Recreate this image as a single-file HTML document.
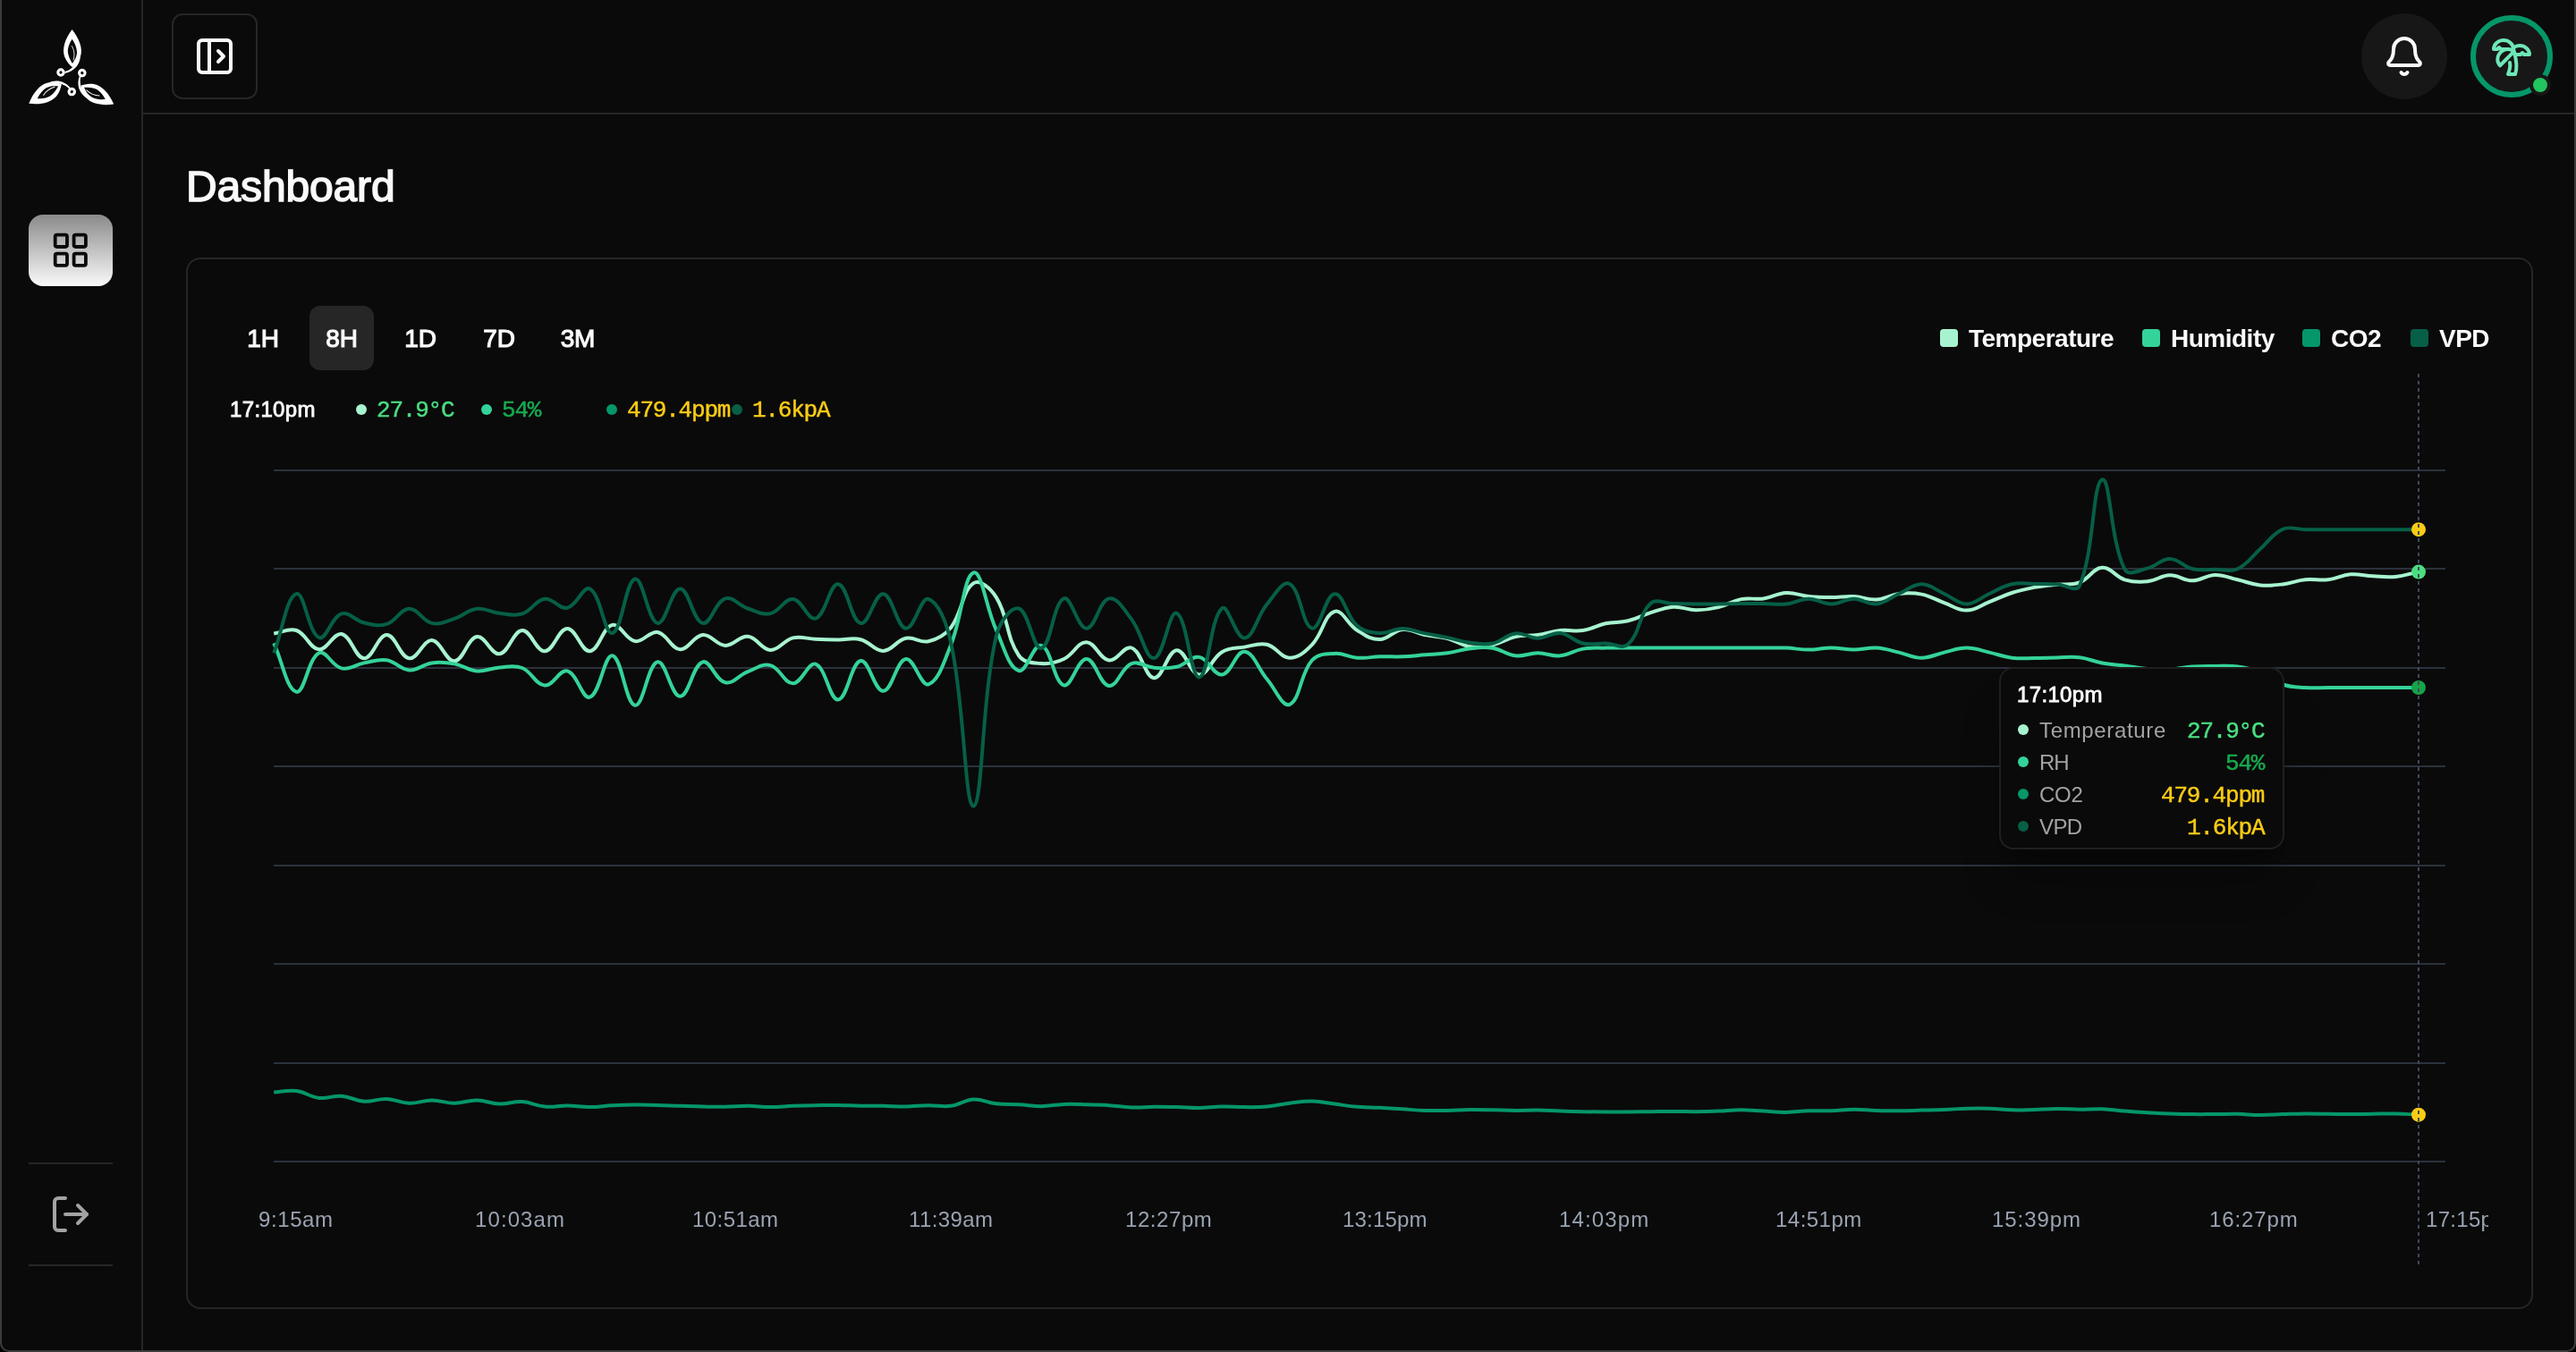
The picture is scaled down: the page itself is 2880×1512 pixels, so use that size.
<!DOCTYPE html>
<html><head><meta charset="utf-8"><title>Dashboard</title>
<style>
html,body{margin:0;padding:0;background:#000;}
body{width:2880px;height:1512px;overflow:hidden;position:relative;font-family:"Liberation Sans",sans-serif;}
#win{position:absolute;left:0;top:0;width:2876px;height:1510px;background:#0a0a0a;border:2px solid #3c3c3c;border-top:none;border-radius:0 0 10px 10px;}
.abs{position:absolute;}
svg{position:absolute;overflow:visible;}
.ic{fill:none;stroke-linecap:round;stroke-linejoin:round;stroke-width:2;}
</style></head><body>
<div id="win"></div>

<div class="abs" style="left:158px;top:0;width:2px;height:1510px;background:#262626"></div>
<svg width="160" height="140" style="left:0;top:0" viewBox="0 0 160 140"><defs><g id="leaf">
<path fill="#fff" fill-rule="evenodd" d="M80.6 32.9C73 43 69 54 72.2 63.5C74.3 69 78 72.8 81 75.2C85.2 72.2 88.6 68 90 63C93 54 88.4 43 80.6 32.9ZM80.6 43.8C77.3 49 74.8 55 76.4 61C77.4 65 79.4 68.4 81 71C83.6 67 86.2 63 86 58C85.7 52.4 83.2 47.8 80.6 43.8Z"/>
<path fill="none" stroke="#fff" stroke-width="0.9" stroke-linecap="round" d="M80.4 51.6C82.6 55.6 84 60 82.2 67"/>
<path fill="#fff" d="M90 63C89 72.5 83 80 72.5 81.9L72.5 80.1C78.5 78.5 83 74 86.5 68.5Z"/>
<circle cx="68" cy="81" r="3.2" fill="none" stroke="#fff" stroke-width="3.1"/>
</g></defs><use href="#leaf"/><use href="#leaf" transform="translate(0.2 -0.2) rotate(120 79.6 88.2)"/><use href="#leaf" transform="translate(1.1 0.75) rotate(240 79.6 88.2)"/></svg>
<div class="abs" style="left:32px;top:240px;width:94px;height:80px;border-radius:16px;background:linear-gradient(to bottom,#8a8a8a,#fafafa)"></div>
<svg class="ic" width="45.6" height="45.6" viewBox="0 0 24 24" style="left:56.2px;top:257.2px;stroke:#0a0a0a"><rect width="7" height="7" x="3" y="3" rx="1"/><rect width="7" height="7" x="14" y="3" rx="1"/><rect width="7" height="7" x="14" y="14" rx="1"/><rect width="7" height="7" x="3" y="14" rx="1"/></svg>
<div class="abs" style="left:32px;top:1300px;width:94px;height:2px;background:#262626"></div>
<div class="abs" style="left:32px;top:1414px;width:94px;height:2px;background:#262626"></div>
<svg class="ic" width="48" height="48" viewBox="0 0 24 24" style="left:55px;top:1334px;stroke:#a3a3a3"><path d="M9 21H5a2 2 0 0 1-2-2V5a2 2 0 0 1 2-2h4"/><polyline points="16 17 21 12 16 7"/><line x1="21" x2="9" y1="12" y2="12"/></svg>
<div class="abs" style="left:160px;top:126px;width:2718px;height:2px;background:#262626"></div>
<div class="abs" style="left:192px;top:15px;width:92px;height:92px;border:2px solid #262626;border-radius:12px"></div>
<svg class="ic" width="48" height="48" viewBox="0 0 24 24" style="left:216px;top:39px;stroke:#fafafa"><rect width="18" height="18" x="3" y="3" rx="2"/><path d="M9 3v18"/><path d="m14 9 3 3-3 3"/></svg>
<div class="abs" style="left:2640px;top:15px;width:96px;height:96px;border-radius:50%;background:#171717"></div>
<svg class="ic" width="48" height="48" viewBox="0 0 24 24" style="left:2664px;top:39px;stroke:#fafafa"><path d="M10.268 21a2 2 0 0 0 3.464 0"/><path d="M3.262 15.326A1 1 0 0 0 4 17h16a1 1 0 0 0 .74-1.673C19.41 13.956 18 12.499 18 8A6 6 0 0 0 6 8c0 4.499-1.411 5.956-2.738 7.326"/></svg>
<div class="abs" style="left:2762px;top:17px;width:80px;height:80px;border:6px solid #059669;border-radius:50%;background:#171717"></div>
<svg class="ic" width="48" height="48" viewBox="0 0 24 24" style="left:2784px;top:39px;stroke:#6ee7b7"><path d="M13 8c0-2.76-2.46-5-5.500-5S2 5.240 2 8h2l1-1 1 1h4"/><path d="M13 7.140A5.820 5.820 0 0 1 16.500 6c3.040 0 5.500 2.240 5.500 5h-3l-1-1-1 1h-3"/><path d="M5.890 9.710c-2.150 2.150-2.300 5.470-.350 7.430l4.240-4.250.700-.700.710-.710 2.120-2.120c-1.950-1.960-5.270-1.800-7.420.350"/><path d="M11 15.500c.500 2.500-.170 4.500-1 6.500h4c2-5.500-.500-12-1-14"/></svg>
<div class="abs" style="left:2828px;top:83px;width:16px;height:16px;border:4px solid #171717;border-radius:50%;background:#22c55e"></div>
<div style="position:absolute;left:207.9px;top:185.37px;font:normal 48px/48px 'Liberation Sans', sans-serif;color:#fafafa;white-space:pre;will-change:transform;letter-spacing:-0.15px;-webkit-text-stroke:1.5px #fafafa;">Dashboard</div>
<div class="abs" style="left:208px;top:288px;width:2620px;height:1172px;border:2px solid #262626;border-radius:16px"></div>
<div class="abs" style="left:346px;top:342px;width:72px;height:72px;border-radius:12px;background:#262626"></div>
<div style="position:absolute;left:258px;top:365.30px;font:normal 28px/28px 'Liberation Sans', sans-serif;color:#fafafa;white-space:pre;will-change:transform;letter-spacing:-0.2px;-webkit-text-stroke:1.1px #fafafa;width:72px;text-align:center;">1H</div>
<div style="position:absolute;left:346px;top:365.30px;font:normal 28px/28px 'Liberation Sans', sans-serif;color:#fafafa;white-space:pre;will-change:transform;letter-spacing:-0.2px;-webkit-text-stroke:1.1px #fafafa;width:72px;text-align:center;">8H</div>
<div style="position:absolute;left:434px;top:365.30px;font:normal 28px/28px 'Liberation Sans', sans-serif;color:#fafafa;white-space:pre;will-change:transform;letter-spacing:-0.2px;-webkit-text-stroke:1.1px #fafafa;width:72px;text-align:center;">1D</div>
<div style="position:absolute;left:522px;top:365.30px;font:normal 28px/28px 'Liberation Sans', sans-serif;color:#fafafa;white-space:pre;will-change:transform;letter-spacing:-0.2px;-webkit-text-stroke:1.1px #fafafa;width:72px;text-align:center;">7D</div>
<div style="position:absolute;left:610px;top:365.30px;font:normal 28px/28px 'Liberation Sans', sans-serif;color:#fafafa;white-space:pre;will-change:transform;letter-spacing:-0.2px;-webkit-text-stroke:1.1px #fafafa;width:72px;text-align:center;">3M</div>
<div class="abs" style="left:2169px;top:368px;width:20px;height:20px;border-radius:4px;background:#a7f3d0"></div>
<div style="position:absolute;left:2200.8px;top:364.60px;font:bold 28px/28px 'Liberation Sans', sans-serif;color:#fafafa;white-space:pre;will-change:transform;letter-spacing:-0.5px;">Temperature</div>
<div class="abs" style="left:2395px;top:368px;width:20px;height:20px;border-radius:4px;background:#34d399"></div>
<div style="position:absolute;left:2427.4px;top:364.60px;font:bold 28px/28px 'Liberation Sans', sans-serif;color:#fafafa;white-space:pre;will-change:transform;letter-spacing:-0.5px;">Humidity</div>
<div class="abs" style="left:2574px;top:368px;width:20px;height:20px;border-radius:4px;background:#059669"></div>
<div style="position:absolute;left:2606.4px;top:364.60px;font:bold 28px/28px 'Liberation Sans', sans-serif;color:#fafafa;white-space:pre;will-change:transform;letter-spacing:-0.5px;">CO2</div>
<div class="abs" style="left:2695px;top:368px;width:20px;height:20px;border-radius:4px;background:#065f46"></div>
<div style="position:absolute;left:2726.6000000000004px;top:364.60px;font:bold 28px/28px 'Liberation Sans', sans-serif;color:#fafafa;white-space:pre;will-change:transform;letter-spacing:-0.5px;">VPD</div>
<div style="position:absolute;left:257px;top:446.08px;font:normal 24px/24px 'Liberation Sans', sans-serif;color:#fafafa;white-space:pre;will-change:transform;letter-spacing:0.35px;-webkit-text-stroke:0.85px #fafafa;">17:10pm</div>
<div class="abs" style="left:398px;top:452px;width:12px;height:12px;border-radius:50%;background:#a7f3d0"></div>
<div style="position:absolute;left:421.4px;top:445.67px;font:normal 26px/26px 'Liberation Mono', monospace;color:#4ade80;white-space:pre;will-change:transform;letter-spacing:-1.2px;-webkit-text-stroke:0.45px #4ade80;">27.9°C</div>
<div class="abs" style="left:538px;top:452px;width:12px;height:12px;border-radius:50%;background:#34d399"></div>
<div style="position:absolute;left:561.4px;top:445.67px;font:normal 26px/26px 'Liberation Mono', monospace;color:#17aa50;white-space:pre;will-change:transform;letter-spacing:-1.2px;-webkit-text-stroke:0.45px #17aa50;">54%</div>
<div class="abs" style="left:678px;top:452px;width:12px;height:12px;border-radius:50%;background:#059669"></div>
<div style="position:absolute;left:701.4px;top:445.67px;font:normal 26px/26px 'Liberation Mono', monospace;color:#facc15;white-space:pre;will-change:transform;letter-spacing:-1.2px;-webkit-text-stroke:0.45px #facc15;">479.4ppm</div>
<div class="abs" style="left:817.5px;top:452px;width:12px;height:12px;border-radius:50%;background:#065f46"></div>
<div style="position:absolute;left:840.9px;top:445.67px;font:normal 26px/26px 'Liberation Mono', monospace;color:#facc15;white-space:pre;will-change:transform;letter-spacing:-1.2px;-webkit-text-stroke:0.45px #facc15;">1.6kpA</div>
<svg width="2880" height="1512" viewBox="0 0 2880 1512" style="left:0;top:0"><rect x="306" y="525" width="2428" height="2" fill="#2c313d"/><rect x="306" y="635" width="2428" height="2" fill="#2c313d"/><rect x="306" y="746" width="2428" height="2" fill="#2c313d"/><rect x="306" y="856" width="2428" height="2" fill="#2c313d"/><rect x="306" y="967" width="2428" height="2" fill="#2c313d"/><rect x="306" y="1077" width="2428" height="2" fill="#2c313d"/><rect x="306" y="1188" width="2428" height="2" fill="#2c313d"/><rect x="306" y="1298" width="2428" height="2" fill="#2c313d"/><path d="M306.2,708.4C316.3,707.1 322.6,701.9 331.4,705.0C342.8,709.0 346.2,725.4 356.7,726.2C366.4,727.0 372.8,707.2 381.9,709.0C393.0,711.3 396.9,736.1 407.1,736.3C417.1,736.5 422.3,710.1 432.4,710.1C442.5,710.1 446.9,735.0 457.6,736.3C467.1,737.4 473.1,715.5 482.8,716.1C493.2,716.7 498.4,740.1 508.1,739.3C518.6,738.5 522.4,713.8 533.3,712.1C542.6,710.6 549.2,732.6 558.5,731.3C569.3,729.7 573.4,705.6 583.8,705.0C593.6,704.4 599.1,728.6 609.0,728.2C619.3,727.8 624.2,703.0 634.3,703.0C644.3,703.0 649.8,729.0 659.5,728.2C670.0,727.4 673.5,701.4 684.7,698.9C693.7,697.0 699.2,715.4 710.0,717.1C719.4,718.6 725.9,705.3 735.2,707.0C746.1,709.0 750.1,725.6 760.4,726.2C770.2,726.8 775.2,711.0 785.7,710.1C795.4,709.2 800.7,721.5 810.9,721.9C820.9,722.2 826.4,710.8 836.1,711.8C846.6,712.8 851.1,726.6 861.4,726.9C871.3,727.2 875.9,716.0 886.6,713.4C896.1,711.1 901.7,714.4 911.8,714.8C921.9,715.2 927.0,715.3 937.1,715.4C947.2,715.5 952.8,712.8 962.3,715.2C973.0,717.8 977.6,728.2 987.5,727.9C997.8,727.6 1002.0,716.1 1012.8,713.8C1022.2,711.8 1028.7,719.5 1038.0,717.2C1048.9,714.6 1056.2,710.7 1063.2,701.7C1076.4,684.7 1075.3,661.0 1088.5,652.2C1095.5,647.5 1107.7,658.3 1113.7,667.9C1127.9,690.6 1124.4,711.6 1139.0,733.0C1144.6,741.2 1153.9,741.2 1164.2,742.1C1174.1,742.8 1180.3,741.3 1189.4,737.0C1200.5,731.8 1204.7,717.9 1214.7,718.2C1224.9,718.5 1229.2,737.1 1239.9,738.4C1249.4,739.6 1256.9,721.3 1265.1,724.5C1277.1,729.2 1280.0,757.7 1290.4,758.2C1300.2,758.7 1305.1,728.0 1315.6,727.2C1325.3,726.5 1330.5,754.1 1340.8,754.5C1350.7,754.9 1354.4,736.4 1366.1,729.2C1374.6,724.0 1381.1,725.3 1391.3,723.6C1401.3,721.9 1407.2,718.5 1416.5,720.8C1427.4,723.4 1431.7,735.7 1441.8,735.7C1451.9,735.7 1459.0,729.0 1467.0,720.8C1479.2,708.2 1480.6,687.4 1492.2,683.8C1500.8,681.1 1506.4,698.1 1517.5,705.0C1526.6,710.7 1532.7,715.3 1542.7,715.1C1552.9,714.9 1557.6,705.0 1568.0,704.0C1577.7,703.0 1583.0,708.0 1593.2,710.1C1603.2,712.1 1608.6,711.5 1618.4,714.1C1628.8,716.8 1633.3,721.7 1643.7,723.2C1653.5,724.6 1659.1,723.3 1668.9,721.2C1679.3,718.9 1683.7,714.4 1694.1,712.1C1703.9,709.9 1709.3,711.5 1719.4,710.1C1729.5,708.6 1734.4,706.0 1744.6,705.0C1754.6,704.0 1760.0,706.5 1769.8,705.0C1780.1,703.4 1784.8,699.5 1795.1,697.3C1805.0,695.2 1810.5,696.6 1820.3,694.3C1830.7,691.8 1835.3,688.4 1845.5,685.2C1855.5,682.1 1860.6,679.4 1870.8,678.7C1880.8,678.1 1885.9,682.1 1896.0,682.2C1906.1,682.3 1911.4,681.5 1921.2,679.1C1931.6,676.7 1936.1,672.1 1946.5,670.1C1956.3,668.2 1961.8,670.8 1971.7,669.5C1982.0,668.0 1986.8,663.5 1996.9,663.0C2006.9,662.5 2012.0,666.0 2022.2,667.0C2032.2,668.0 2037.3,668.0 2047.4,668.0C2057.5,668.0 2062.6,666.5 2072.7,667.0C2082.8,667.5 2087.9,671.1 2097.9,670.5C2108.1,669.8 2112.9,665.2 2123.1,664.0C2133.1,662.8 2138.6,662.7 2148.4,664.6C2158.8,666.7 2163.4,670.5 2173.6,674.1C2183.6,677.7 2188.8,682.8 2198.8,682.6C2209.0,682.4 2214.0,677.0 2224.1,673.1C2234.2,669.2 2239.0,666.3 2249.3,663.0C2259.2,659.8 2264.3,658.8 2274.5,656.9C2284.5,655.1 2289.7,654.9 2299.8,653.8C2309.8,652.7 2315.8,654.8 2325.0,651.4C2336.0,647.2 2339.9,635.4 2350.2,634.8C2360.1,634.2 2364.8,645.0 2375.5,648.3C2384.9,651.2 2390.8,651.3 2400.7,650.3C2411.0,649.3 2415.8,643.5 2425.9,643.3C2436.0,643.1 2441.1,649.4 2451.2,649.3C2461.3,649.3 2466.3,643.1 2476.4,642.9C2486.5,642.7 2491.6,646.0 2501.6,648.3C2511.8,650.6 2516.6,653.4 2526.9,654.4C2536.8,655.4 2542.1,654.6 2552.1,653.4C2562.3,652.2 2567.2,649.3 2577.3,648.3C2587.3,647.3 2592.6,649.5 2602.6,648.3C2612.8,647.1 2617.6,643.1 2627.8,642.3C2637.8,641.5 2642.9,643.8 2653.1,644.3C2663.1,644.8 2668.3,645.8 2678.3,644.9C2688.5,644.0 2693.4,641.7 2703.5,639.6" fill="none" stroke="#a7f3d0" stroke-width="4" stroke-linecap="butt" stroke-linejoin="round"/><path d="M306.2,719.3C316.3,741.1 320.5,771.3 331.4,773.7C340.6,775.7 344.1,736.8 356.7,730.3C364.3,726.3 371.0,745.0 381.9,747.4C391.2,749.5 396.9,743.2 407.1,741.4C417.1,739.6 422.7,736.8 432.4,738.3C442.9,740.0 447.3,748.8 457.6,749.4C467.5,750.0 472.5,742.8 482.8,741.4C492.7,740.0 498.2,740.6 508.1,742.4C518.4,744.2 523.0,749.6 533.3,750.4C543.2,751.2 548.4,747.1 558.5,746.4C568.6,745.7 574.9,743.4 583.8,747.0C595.1,751.5 598.6,765.9 609.0,766.6C618.8,767.3 625.4,748.2 634.3,750.4C645.6,753.4 651.0,782.6 659.5,779.7C671.2,775.8 675.4,731.6 684.7,733.3C695.5,735.2 699.3,787.3 710.0,788.8C719.5,790.1 724.2,742.5 735.2,740.3C744.4,738.5 750.3,778.7 760.4,778.7C770.5,778.7 774.1,743.9 785.7,740.3C794.3,737.7 799.8,760.9 810.9,763.3C820.0,765.2 825.7,755.1 836.1,751.1C845.9,747.4 852.3,741.7 861.4,744.1C872.5,747.0 876.6,764.5 886.6,764.3C896.8,764.0 903.5,739.7 911.8,742.7C923.7,746.9 927.3,783.1 937.1,782.4C947.5,781.7 951.3,741.1 962.3,739.0C971.5,737.3 977.6,773.1 987.5,772.8C997.8,772.3 1002.0,738.6 1012.8,737.0C1022.1,735.6 1029.4,768.0 1038.0,765.3C1049.6,761.6 1055.6,739.7 1063.2,720.9C1075.8,689.8 1077.4,644.1 1088.5,640.5C1097.5,637.5 1102.3,679.4 1113.7,704.3C1122.5,723.3 1127.2,746.1 1139.0,750.1C1147.4,753.1 1155.6,719.1 1164.2,721.9C1175.8,725.6 1177.9,762.8 1189.4,766.3C1198.1,768.9 1204.6,736.9 1214.7,737.0C1224.8,737.1 1229.3,765.8 1239.9,766.9C1249.5,767.9 1253.4,746.7 1265.1,742.1C1273.6,738.7 1280.2,745.9 1290.4,746.7C1300.4,747.4 1305.9,748.1 1315.6,745.8C1326.1,743.3 1331.5,733.3 1340.8,734.9C1351.7,736.8 1356.6,755.6 1366.1,754.5C1376.8,753.2 1381.7,727.9 1391.3,728.8C1401.9,729.9 1406.2,747.5 1416.5,759.5C1426.4,771.0 1433.6,791.2 1441.8,787.8C1453.8,782.8 1453.3,753.8 1467.0,738.3C1473.5,731.0 1482.0,731.4 1492.2,730.9C1502.2,730.3 1507.3,735.0 1517.5,735.7C1527.5,736.4 1532.6,734.6 1542.7,734.3C1552.8,734.0 1557.9,734.7 1568.0,734.3C1578.1,733.9 1583.1,733.1 1593.2,732.3C1603.3,731.5 1608.4,731.7 1618.4,730.3C1628.6,728.8 1633.5,726.3 1643.7,725.2C1653.7,724.1 1659.1,723.2 1668.9,724.8C1679.3,726.5 1683.8,732.2 1694.1,733.3C1704.0,734.3 1709.3,730.3 1719.4,730.3C1729.5,730.3 1734.7,734.2 1744.6,733.3C1754.9,732.3 1759.5,727.4 1769.8,725.6C1779.7,723.9 1785.0,724.8 1795.1,724.6C1805.2,724.4 1810.2,724.6 1820.3,724.6C1830.4,724.6 1835.4,724.6 1845.5,724.6C1855.6,724.6 1860.7,724.6 1870.8,724.6C1880.9,724.6 1885.9,724.6 1896.0,724.6C1906.1,724.6 1911.1,724.6 1921.2,724.6C1931.3,724.6 1936.4,724.6 1946.5,724.6C1956.6,724.6 1961.6,724.6 1971.7,724.6C1981.8,724.6 1986.9,724.2 1996.9,724.6C2007.1,725.0 2012.1,726.6 2022.2,726.6C2032.3,726.6 2037.3,724.6 2047.4,724.6C2057.5,724.6 2062.6,726.6 2072.7,726.6C2082.7,726.6 2087.9,724.0 2097.9,724.6C2108.1,725.2 2113.1,727.4 2123.1,729.6C2133.3,731.9 2138.3,735.7 2148.4,735.7C2158.4,735.7 2163.5,731.9 2173.6,729.6C2183.6,727.4 2188.7,724.6 2198.8,724.6C2208.9,724.6 2214.0,727.4 2224.1,729.6C2234.2,731.9 2239.1,734.4 2249.3,735.7C2259.2,737.0 2264.4,736.1 2274.5,736.1C2284.6,736.1 2289.7,735.7 2299.8,735.5C2309.9,735.3 2315.1,734.1 2325.0,735.3C2335.2,736.5 2340.0,739.6 2350.2,741.5C2360.2,743.3 2365.4,743.2 2375.5,744.5C2385.6,745.8 2390.6,747.2 2400.7,748.0C2410.8,748.8 2415.9,749.0 2425.9,748.5C2436.1,748.0 2441.0,746.2 2451.2,745.5C2461.2,744.8 2466.3,745.0 2476.4,745.0C2486.5,745.0 2491.7,744.1 2501.6,745.5C2511.9,746.9 2517.3,748.2 2526.9,752.0C2537.4,756.2 2541.4,761.9 2552.1,765.5C2561.6,768.7 2567.2,768.3 2577.3,769.0C2587.4,769.7 2592.5,769.0 2602.6,769.0C2612.7,769.0 2617.7,769.0 2627.8,769.0C2637.9,769.0 2643.0,769.0 2653.1,769.0C2663.1,769.0 2668.2,769.0 2678.3,769.0C2688.4,769.0 2693.4,769.0 2703.5,769.0" fill="none" stroke="#34d399" stroke-width="4" stroke-linecap="butt" stroke-linejoin="round"/><path d="M306.2,1221.6C316.3,1220.9 321.6,1218.7 331.4,1220.0C341.8,1221.3 346.4,1226.8 356.7,1227.9C366.5,1229.1 371.9,1225.0 381.9,1225.7C392.1,1226.5 396.9,1231.1 407.1,1231.8C417.1,1232.4 422.3,1228.5 432.4,1228.9C442.5,1229.3 447.5,1233.3 457.6,1233.7C467.7,1234.0 472.8,1230.5 482.8,1230.5C492.9,1230.5 498.0,1233.7 508.1,1233.7C518.2,1233.7 523.2,1230.3 533.3,1230.5C543.4,1230.7 548.4,1234.3 558.5,1234.6C568.6,1234.9 573.8,1231.5 583.8,1232.1C594.0,1232.7 598.8,1236.6 609.0,1237.5C619.0,1238.4 624.2,1236.4 634.3,1236.5C644.4,1236.7 649.4,1238.2 659.5,1238.1C669.6,1238.1 674.6,1236.7 684.7,1236.2C694.8,1235.7 699.9,1235.6 710.0,1235.6C720.1,1235.5 725.1,1235.6 735.2,1235.9C745.3,1236.1 750.3,1236.5 760.4,1236.8C770.5,1237.2 775.6,1237.3 785.7,1237.5C795.8,1237.7 800.8,1237.9 810.9,1237.8C821.0,1237.7 826.0,1236.8 836.1,1236.8C846.2,1236.9 851.3,1238.1 861.4,1238.1C871.5,1238.1 876.5,1237.2 886.6,1236.8C896.7,1236.5 901.7,1236.4 911.8,1236.2C921.9,1236.0 927.0,1235.8 937.1,1235.9C947.2,1236.0 952.2,1236.7 962.3,1236.8C972.4,1237.0 977.5,1236.7 987.5,1236.8C997.6,1237.0 1002.7,1237.6 1012.8,1237.5C1022.9,1237.4 1027.9,1236.3 1038.0,1236.2C1048.1,1236.1 1053.4,1238.2 1063.2,1236.8C1073.5,1235.5 1078.3,1230.0 1088.5,1229.5C1098.5,1229.0 1103.5,1233.1 1113.7,1234.3C1123.7,1235.4 1128.9,1234.7 1139.0,1235.3C1149.1,1235.8 1154.1,1237.2 1164.2,1237.2C1174.3,1237.1 1179.3,1235.3 1189.4,1234.9C1199.5,1234.6 1204.6,1235.0 1214.7,1235.3C1224.8,1235.5 1229.8,1235.6 1239.9,1236.2C1250.0,1236.8 1255.0,1238.1 1265.1,1238.4C1275.2,1238.8 1280.3,1237.9 1290.4,1237.8C1300.5,1237.7 1305.5,1237.9 1315.6,1238.1C1325.7,1238.4 1330.7,1239.2 1340.8,1239.1C1350.9,1238.9 1356.0,1237.7 1366.1,1237.5C1376.2,1237.3 1381.2,1238.1 1391.3,1238.1C1401.4,1238.1 1406.5,1238.4 1416.5,1237.5C1426.7,1236.6 1431.6,1234.9 1441.8,1233.7C1451.8,1232.5 1456.9,1231.2 1467.0,1231.4C1477.1,1231.6 1482.2,1233.3 1492.2,1234.6C1502.3,1235.9 1507.3,1237.0 1517.5,1237.8C1527.5,1238.6 1532.6,1238.2 1542.7,1238.8C1552.8,1239.3 1557.9,1239.7 1568.0,1240.3C1578.0,1241.0 1583.1,1241.6 1593.2,1241.9C1603.3,1242.3 1608.3,1242.1 1618.4,1241.9C1628.5,1241.7 1633.6,1241.1 1643.7,1241.0C1653.7,1240.9 1658.8,1241.1 1668.9,1241.3C1679.0,1241.5 1684.0,1241.9 1694.1,1241.9C1704.2,1242.0 1709.3,1241.5 1719.4,1241.6C1729.5,1241.7 1734.5,1242.3 1744.6,1242.6C1754.7,1242.9 1759.7,1243.0 1769.8,1243.2C1779.9,1243.4 1785.0,1243.5 1795.1,1243.5C1805.2,1243.6 1810.2,1243.6 1820.3,1243.5C1830.4,1243.5 1835.4,1243.3 1845.5,1243.2C1855.6,1243.1 1860.7,1242.9 1870.8,1242.9C1880.9,1242.9 1885.9,1243.3 1896.0,1243.2C1906.1,1243.1 1911.2,1243.0 1921.2,1242.6C1931.3,1242.2 1936.4,1241.3 1946.5,1241.3C1956.6,1241.3 1961.6,1242.1 1971.7,1242.6C1981.8,1243.1 1986.9,1243.9 1996.9,1243.9C2007.0,1243.8 2012.1,1242.6 2022.2,1242.3C2032.3,1241.9 2037.3,1242.6 2047.4,1242.3C2057.5,1241.9 2062.6,1240.7 2072.7,1240.7C2082.7,1240.6 2087.8,1241.6 2097.9,1241.9C2108.0,1242.3 2113.0,1242.3 2123.1,1242.3C2133.2,1242.2 2138.3,1241.9 2148.4,1241.6C2158.4,1241.4 2163.5,1241.4 2173.6,1241.0C2183.7,1240.6 2188.7,1240.0 2198.8,1239.7C2208.9,1239.5 2214.0,1239.4 2224.1,1239.7C2234.2,1240.0 2239.2,1241.0 2249.3,1241.3C2259.4,1241.6 2264.4,1241.2 2274.5,1241.0C2284.6,1240.7 2289.7,1240.1 2299.8,1240.0C2309.9,1240.0 2314.9,1240.6 2325.0,1240.7C2335.1,1240.7 2340.2,1240.0 2350.2,1240.3C2360.3,1240.7 2365.4,1241.8 2375.5,1242.6C2385.6,1243.3 2390.6,1243.6 2400.7,1244.2C2410.8,1244.7 2415.8,1245.1 2425.9,1245.4C2436.0,1245.8 2441.1,1246.0 2451.2,1246.1C2461.3,1246.2 2466.3,1246.1 2476.4,1246.1C2486.5,1246.0 2491.6,1245.6 2501.6,1245.8C2511.7,1246.0 2516.8,1247.0 2526.9,1247.0C2537.0,1247.1 2542.0,1246.4 2552.1,1246.1C2562.2,1245.8 2567.3,1245.5 2577.3,1245.4C2587.4,1245.4 2592.5,1245.6 2602.6,1245.8C2612.7,1245.9 2617.7,1246.1 2627.8,1246.1C2637.9,1246.1 2643.0,1245.9 2653.1,1245.8C2663.1,1245.6 2668.2,1245.3 2678.3,1245.4C2688.4,1245.6 2693.4,1246.2 2703.5,1246.7" fill="none" stroke="#059669" stroke-width="4" stroke-linecap="butt" stroke-linejoin="round"/><path d="M306.2,730.3C316.3,703.8 320.1,668.1 331.4,664.2C340.3,661.2 344.6,707.8 356.7,713.1C364.8,716.6 370.3,690.2 381.9,686.4C390.5,683.6 396.7,694.1 407.1,696.5C416.9,698.7 423.2,700.8 432.4,697.9C443.4,694.5 447.4,681.0 457.6,680.8C467.6,680.6 472.0,694.5 482.8,696.9C492.2,699.0 498.3,695.0 508.1,691.9C518.5,688.5 522.9,682.0 533.3,680.8C543.1,679.6 548.4,684.7 558.5,685.8C568.5,686.9 574.6,689.4 583.8,686.4C594.8,682.9 598.4,671.1 609.0,669.7C618.6,668.4 625.1,681.8 634.3,679.8C645.3,677.3 652.0,654.4 659.5,658.6C672.2,665.7 675.5,710.1 684.7,708.0C695.7,705.6 699.0,649.9 710.0,647.5C719.2,645.4 724.1,694.5 735.2,696.9C744.3,698.9 750.3,658.6 760.4,658.6C770.5,658.6 774.5,694.5 785.7,696.9C794.7,698.9 799.3,673.1 810.9,669.4C819.5,666.6 825.7,677.0 836.1,680.5C845.9,683.7 852.0,688.1 861.4,686.1C872.2,683.9 877.0,668.9 886.6,670.0C897.2,671.1 903.4,694.4 911.8,691.6C923.6,687.7 927.5,652.2 937.1,653.2C947.7,654.3 951.2,694.6 962.3,697.0C971.4,699.0 978.0,663.2 987.5,664.3C998.2,665.5 1002.2,701.5 1012.8,702.7C1022.4,703.7 1029.4,667.0 1038.0,669.8C1049.5,673.5 1058.6,697.5 1063.2,718.8C1078.8,790.2 1078.6,903.0 1088.5,901.6C1098.8,900.1 1097.0,784.9 1113.7,711.8C1117.2,696.4 1130.1,678.2 1139.0,680.5C1150.3,683.4 1155.0,726.9 1164.2,724.9C1175.2,722.5 1177.4,674.6 1189.4,669.4C1197.6,665.7 1204.6,702.7 1214.7,702.7C1224.8,702.7 1228.8,671.6 1239.9,669.4C1249.0,667.5 1256.9,681.8 1265.1,692.6C1277.1,708.4 1280.8,737.3 1290.4,736.0C1301.0,734.6 1307.0,682.2 1315.6,685.8C1327.2,690.8 1331.1,758.6 1340.8,757.5C1351.3,756.4 1352.7,692.0 1366.1,680.4C1372.9,674.4 1381.6,714.4 1391.3,713.5C1401.8,712.5 1405.0,689.6 1416.5,675.7C1425.2,665.3 1434.1,648.8 1441.8,652.9C1454.3,659.6 1455.9,700.1 1467.0,702.6C1476.1,704.6 1481.9,664.8 1492.2,664.2C1502.1,663.7 1504.9,689.0 1517.5,700.0C1525.1,706.6 1532.5,707.4 1542.7,708.0C1552.7,708.6 1557.9,702.9 1568.0,703.0C1578.1,703.1 1583.1,706.4 1593.2,708.4C1603.2,710.5 1608.4,711.0 1618.4,713.1C1628.6,715.2 1633.4,717.4 1643.7,718.7C1653.6,720.0 1659.2,721.5 1668.9,719.5C1679.4,717.4 1683.7,709.7 1694.1,708.4C1703.9,707.3 1709.3,713.8 1719.4,713.7C1729.5,713.6 1734.9,706.9 1744.6,708.0C1755.0,709.2 1759.3,717.1 1769.8,719.5C1779.4,721.7 1785.0,719.3 1795.1,719.5C1805.2,719.7 1813.7,726.4 1820.3,720.5C1833.9,708.4 1831.9,687.0 1845.5,674.7C1852.1,668.8 1860.7,674.9 1870.8,675.1C1880.9,675.3 1885.9,675.4 1896.0,675.5C1906.1,675.6 1911.1,675.6 1921.2,675.5C1931.3,675.4 1936.4,675.2 1946.5,675.1C1956.6,675.0 1961.6,675.0 1971.7,675.1C1981.8,675.2 1987.0,676.6 1996.9,675.5C2007.2,674.4 2012.1,669.7 2022.2,669.7C2032.3,669.7 2037.3,675.5 2047.4,675.5C2057.5,675.5 2062.6,669.7 2072.7,669.7C2082.7,669.7 2088.1,676.6 2097.9,675.5C2108.3,674.3 2113.0,668.5 2123.1,664.0C2133.2,659.6 2138.3,653.3 2148.4,653.3C2158.4,653.3 2163.6,659.6 2173.6,664.0C2183.7,668.5 2188.7,675.5 2198.8,675.5C2208.9,675.5 2213.9,668.5 2224.1,664.0C2234.1,659.6 2238.8,655.6 2249.3,653.3C2259.0,651.2 2264.4,652.9 2274.5,652.9C2284.6,652.9 2289.7,653.0 2299.8,653.4C2309.9,653.8 2321.5,663.1 2325.0,655.0C2341.7,616.2 2339.3,540.2 2350.2,536.3C2359.5,532.9 2359.2,604.9 2375.5,636.8C2379.4,644.6 2391.0,637.9 2400.7,635.6C2411.2,633.2 2415.9,625.0 2425.9,625.1C2436.1,625.2 2440.6,633.8 2451.2,636.2C2460.8,638.5 2466.3,636.8 2476.4,636.8C2486.5,636.8 2493.0,640.1 2501.6,636.2C2513.2,631.0 2516.8,622.9 2526.9,614.0C2537.0,605.1 2540.6,596.8 2552.1,591.8C2560.8,588.0 2567.3,592.1 2577.3,592.2C2587.4,592.3 2592.5,592.2 2602.6,592.2C2612.7,592.2 2617.7,592.2 2627.8,592.2C2637.9,592.2 2643.0,592.2 2653.1,592.2C2663.1,592.2 2668.2,592.2 2678.3,592.2C2688.4,592.2 2693.4,592.2 2703.5,592.2" fill="none" stroke="#065f46" stroke-width="4" stroke-linecap="butt" stroke-linejoin="round"/><circle cx="2704" cy="639.6" r="8" fill="#4ade80"/><circle cx="2704" cy="769.0" r="8" fill="#16a34a"/><circle cx="2704" cy="1246.7" r="8" fill="#facc15"/><circle cx="2704" cy="592.2" r="8" fill="#facc15"/><line x1="2704" x2="2704" y1="418" y2="1414" stroke="#3f495b" stroke-width="2" stroke-dasharray="4 4"/></svg>
<div class="abs" style="left:250px;top:1340px;width:2532px;height:50px;overflow:hidden">
<div style="position:absolute;left:39.19999999999999px;top:11.68px;font:normal 24px/24px 'Liberation Sans', sans-serif;color:#9aa3b2;white-space:pre;will-change:transform;letter-spacing:0.6px;">9:15am</div>
<div style="position:absolute;left:281.46000000000004px;top:11.68px;font:normal 24px/24px 'Liberation Sans', sans-serif;color:#9aa3b2;white-space:pre;will-change:transform;letter-spacing:1.1px;">10:03am</div>
<div style="position:absolute;left:523.72px;top:11.68px;font:normal 24px/24px 'Liberation Sans', sans-serif;color:#9aa3b2;white-space:pre;will-change:transform;letter-spacing:0.45px;">10:51am</div>
<div style="position:absolute;left:765.98px;top:11.68px;font:normal 24px/24px 'Liberation Sans', sans-serif;color:#9aa3b2;white-space:pre;will-change:transform;letter-spacing:0.38px;">11:39am</div>
<div style="position:absolute;left:1008.24px;top:11.68px;font:normal 24px/24px 'Liberation Sans', sans-serif;color:#9aa3b2;white-space:pre;will-change:transform;letter-spacing:0.57px;">12:27pm</div>
<div style="position:absolute;left:1250.5px;top:11.68px;font:normal 24px/24px 'Liberation Sans', sans-serif;color:#9aa3b2;white-space:pre;will-change:transform;letter-spacing:0.2px;">13:15pm</div>
<div style="position:absolute;left:1492.76px;top:11.68px;font:normal 24px/24px 'Liberation Sans', sans-serif;color:#9aa3b2;white-space:pre;will-change:transform;letter-spacing:1.13px;">14:03pm</div>
<div style="position:absolute;left:1735.02px;top:11.68px;font:normal 24px/24px 'Liberation Sans', sans-serif;color:#9aa3b2;white-space:pre;will-change:transform;letter-spacing:0.47px;">14:51pm</div>
<div style="position:absolute;left:1977.2799999999997px;top:11.68px;font:normal 24px/24px 'Liberation Sans', sans-serif;color:#9aa3b2;white-space:pre;will-change:transform;letter-spacing:0.95px;">15:39pm</div>
<div style="position:absolute;left:2219.54px;top:11.68px;font:normal 24px/24px 'Liberation Sans', sans-serif;color:#9aa3b2;white-space:pre;will-change:transform;letter-spacing:0.9px;">16:27pm</div>
<div style="position:absolute;left:2461.7999999999997px;top:11.68px;font:normal 24px/24px 'Liberation Sans', sans-serif;color:#9aa3b2;white-space:pre;will-change:transform;letter-spacing:0.3px;">17:15pm</div>
</div>
<div class="abs" style="left:2234.5px;top:746px;width:315px;height:200px;border:2px solid #1f1f1f;border-radius:16px;background:#0a0a0a;box-shadow:0 40px 50px -10px rgba(0,0,0,.3),0 16px 20px -12px rgba(0,0,0,.3)"></div>
<div style="position:absolute;left:2255px;top:765.38px;font:normal 24px/24px 'Liberation Sans', sans-serif;color:#fafafa;white-space:pre;will-change:transform;letter-spacing:0.35px;-webkit-text-stroke:0.85px #fafafa;">17:10pm</div>
<div class="abs" style="left:2256px;top:810.0px;width:12px;height:12px;border-radius:50%;background:#a7f3d0"></div>
<div style="position:absolute;left:2280px;top:805.38px;font:normal 24px/24px 'Liberation Sans', sans-serif;color:#a3a3a3;white-space:pre;will-change:transform;letter-spacing:0.66px;">Temperature</div>
<div style="position:absolute;right:348.8000000000002px;top:804.57px;font:normal 26px/26px 'Liberation Mono', monospace;color:#4ade80;white-space:pre;will-change:transform;letter-spacing:-1.2px;-webkit-text-stroke:0.45px #4ade80;">27.9°C</div>
<div class="abs" style="left:2256px;top:846.0px;width:12px;height:12px;border-radius:50%;background:#34d399"></div>
<div style="position:absolute;left:2280px;top:841.38px;font:normal 24px/24px 'Liberation Sans', sans-serif;color:#a3a3a3;white-space:pre;will-change:transform;letter-spacing:-1px;">RH</div>
<div style="position:absolute;right:348.8000000000002px;top:840.57px;font:normal 26px/26px 'Liberation Mono', monospace;color:#17aa50;white-space:pre;will-change:transform;letter-spacing:-1.2px;-webkit-text-stroke:0.45px #17aa50;">54%</div>
<div class="abs" style="left:2256px;top:882.0px;width:12px;height:12px;border-radius:50%;background:#059669"></div>
<div style="position:absolute;left:2280px;top:877.38px;font:normal 24px/24px 'Liberation Sans', sans-serif;color:#a3a3a3;white-space:pre;will-change:transform;letter-spacing:-0.3px;">CO2</div>
<div style="position:absolute;right:348.8000000000002px;top:876.57px;font:normal 26px/26px 'Liberation Mono', monospace;color:#facc15;white-space:pre;will-change:transform;letter-spacing:-1.2px;-webkit-text-stroke:0.45px #facc15;">479.4ppm</div>
<div class="abs" style="left:2256px;top:918.0px;width:12px;height:12px;border-radius:50%;background:#065f46"></div>
<div style="position:absolute;left:2280px;top:913.38px;font:normal 24px/24px 'Liberation Sans', sans-serif;color:#a3a3a3;white-space:pre;will-change:transform;letter-spacing:-0.6px;">VPD</div>
<div style="position:absolute;right:348.8000000000002px;top:912.57px;font:normal 26px/26px 'Liberation Mono', monospace;color:#facc15;white-space:pre;will-change:transform;letter-spacing:-1.2px;-webkit-text-stroke:0.45px #facc15;">1.6kpA</div>
</body></html>
